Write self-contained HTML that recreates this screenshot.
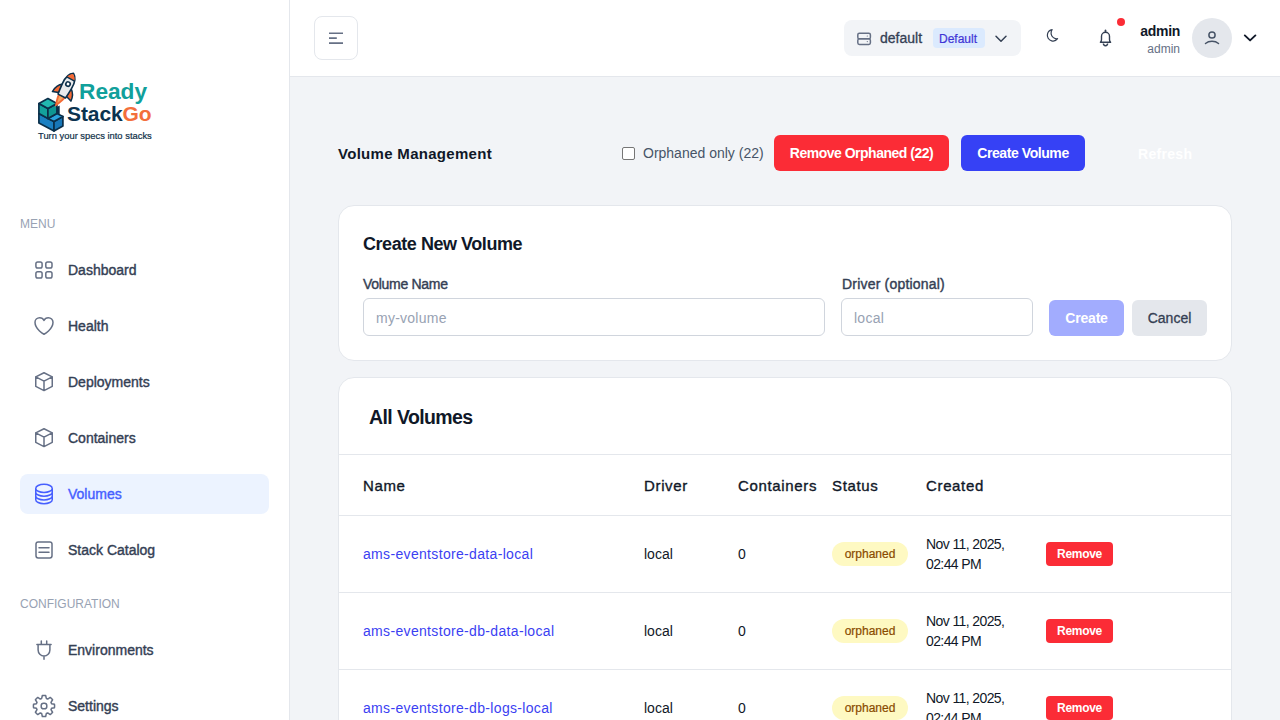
<!DOCTYPE html>
<html><head><meta charset="utf-8">
<style>
*{box-sizing:border-box;margin:0;padding:0}
html,body{width:1280px;height:720px;overflow:hidden;background:#f2f4f7;font-family:"Liberation Sans",sans-serif;color:#344054}
.abs{position:absolute}
#sidebar{position:absolute;left:0;top:0;width:290px;height:720px;background:#fff;border-right:1px solid #e4e7ec}
#header{position:absolute;left:290px;top:0;width:990px;height:77px;background:#fff;border-bottom:1px solid #e4e7ec}
.t{position:absolute;white-space:nowrap;line-height:20px}
.sec{position:absolute;left:20px;font-size:12px;color:#98a2b3;line-height:16px}
.item{position:absolute;left:20px;width:249px;height:40px;border-radius:8px}
.item svg{position:absolute;left:12px;top:8px;width:24px;height:24px;fill:none;stroke:#667085;stroke-width:1.5;stroke-linecap:round;stroke-linejoin:round}
.item span{position:absolute;left:48px;top:10px;line-height:20px;font-size:14px;color:#344054;-webkit-text-stroke:0.4px #344054}
.item.active{background:#ecf3ff}
.item.active svg{stroke:#465fff}
.item.active span{color:#465fff;-webkit-text-stroke:0.4px #465fff}
.card{position:absolute;left:338px;width:894px;background:#fff;border:1px solid #e4e7ec;border-radius:16px}
.btn{position:absolute;display:flex;align-items:center;justify-content:center;white-space:nowrap;font-weight:bold;font-size:14px}
.inp{position:absolute;border:1px solid #d0d5dd;border-radius:6px;background:#fff;height:38px;top:298px}
.inp span{position:absolute;left:12px;top:9px;line-height:20px;font-size:14px;color:#98a2b3;letter-spacing:0.25px}
.hline{position:absolute;left:339px;width:892px;height:1px;background:#e4e7ec}
.th{position:absolute;font-size:15px;color:#101828;line-height:20px;white-space:nowrap;-webkit-text-stroke:0.35px #101828;letter-spacing:0.65px}
.td{position:absolute;font-size:14px;color:#101828;line-height:20px;white-space:nowrap}
.link{color:#3b3ff2;letter-spacing:0.33px}
.badge{position:absolute;left:832px;width:76px;height:24px;border-radius:12px;background:#fef9c2;color:#894b00;font-size:12px;display:flex;align-items:center;justify-content:center;-webkit-text-stroke:0.2px #894b00}
.rm{position:absolute;left:1046px;width:67px;height:24px;border-radius:4px;background:#fb2c36;color:#fff;font-size:12px;font-weight:bold;display:flex;align-items:center;justify-content:center;letter-spacing:-0.3px}
</style></head><body>

<div id="sidebar">
  <!-- logo -->
  <svg class="abs" style="left:0;top:0" width="170" height="150" viewBox="0 0 170 150">
    <g stroke="#0b2f4a" stroke-width="1.7" stroke-linejoin="round">
      <!-- lower box -->
      <path d="M38.9 113.5 L54 121.5 L54 131 L38.9 123 Z" fill="#1b80c2"/>
      <path d="M54 121.5 L62.9 116.5 L62.9 126 L54 131 Z" fill="#1877b8"/>
      <path d="M47.9 118.5 L56.9 113.5 L62.9 116.5 L54 121.5 Z" fill="#2ba4de"/>
      <!-- upper cube -->
      <path d="M56 107.5 L59.7 105.6 L59.7 114.8 L56 112.9 Z" fill="#0b2f4a" stroke="none"/>
      <path d="M38.9 103.5 L47.9 108.5 L47.9 118.5 L38.9 113.5 Z" fill="#13a19c"/>
      <path d="M47.9 108.5 L56.9 103.5 L56.9 113.5 L47.9 118.5 Z" fill="#0f9692"/>
      <path d="M47.9 98.5 L38.9 103.5 L47.9 108.5 L56.9 103.5 Z" fill="#22b8b0"/>
    </g>
    <!-- rocket -->
    <g transform="translate(73.9 72.7) rotate(27.4)">
      <path d="M-4.2 26 L4.2 26 C3.2 31 1.2 35 -1.1 39 C-2.6 35 -3.9 31 -4.2 26 Z" fill="#f46a35"/>
      <path d="M-2.3 26.5 L2.3 26.5 C1.6 29.5 0.5 32 -0.8 34.5 C-1.6 32 -2.1 29.5 -2.3 26.5 Z" fill="#f8a65e"/>
      <path d="M-4.6 15.2 C-7.8 17.5 -10.2 22 -10.4 26.6 C-8.4 25.8 -6.2 25.1 -4.3 24.6 Z" fill="#f46a35" stroke="#0b2f4a" stroke-width="1.5" stroke-linejoin="round"/>
      <path d="M4.6 15.2 C7.8 17.5 10.2 22 10.4 26.6 C8.4 25.8 6.2 25.1 4.3 24.6 Z" fill="#f46a35" stroke="#0b2f4a" stroke-width="1.5" stroke-linejoin="round"/>
      <path d="M0 0.8 C4.5 3.5 5.6 9 5.2 15 C5 19 4.7 23 4.2 26.3 L-4.2 26.3 C-4.7 23 -5 19 -5.2 15 C-5.6 9 -4.5 3.5 0 0.8 Z" fill="#e9eaec" stroke="#0b2f4a" stroke-width="1.6" stroke-linejoin="round"/>
      <path d="M0 1.6 C2.4 3.1 3.6 5 4.2 6.8 L-4.2 6.8 C-3.6 5 -2.4 3.1 0 1.6 Z" fill="#f46a35"/>
      <path d="M-4.4 7.1 L4.4 7.1" stroke="#0b2f4a" stroke-width="1.4"/>
      <circle cx="0" cy="12.8" r="2.2" fill="#fff" stroke="#0b2f4a" stroke-width="1.6"/>
    </g>
  </svg>
  <div class="t" style="left:79px;top:77px;line-height:28px;font-size:22.7px;font-weight:bold;color:#11a09b">Ready</div>
  <div class="t" style="left:67px;top:100px;line-height:28px;font-size:21px;font-weight:bold;color:#0b3350;letter-spacing:-0.1px">Stack<span style="color:#f36f3c">Go</span></div>
  <div class="t" style="left:38px;top:129px;line-height:14px;font-size:9.4px;color:#0f3049;-webkit-text-stroke:0.2px #0f3049">Turn your specs into stacks</div>
  <div class="sec" style="top:216px">MENU</div>
  <div class="item" style="top:250px"><svg viewBox="0 0 24 24"><rect x="3.9" y="3.9" width="6.2" height="6.2" rx="1.8"/><rect x="13.8" y="3.9" width="6.2" height="6.2" rx="1.8"/><rect x="3.9" y="13.8" width="6.2" height="6.2" rx="1.8"/><rect x="13.8" y="13.8" width="6.2" height="6.2" rx="1.8"/></svg><span>Dashboard</span></div>
  <div class="item" style="top:306px"><svg viewBox="0 0 24 24"><path d="M21 8.25c0-2.485-2.099-4.5-4.688-4.5-1.935 0-3.597 1.126-4.312 2.733-.715-1.607-2.377-2.733-4.313-2.733C5.1 3.75 3 5.765 3 8.25c0 7.22 9 12 9 12s9-4.78 9-12Z"/></svg><span>Health</span></div>
  <div class="item" style="top:362px"><svg viewBox="0 0 24 24"><path d="M12 2.75L20.25 6.9V16.3L12 20.55L3.75 16.3V6.9Z M3.75 6.9L12 11.1L20.25 6.9 M12 11.1V20.55"/></svg><span>Deployments</span></div>
  <div class="item" style="top:418px"><svg viewBox="0 0 24 24"><path d="M12 2.75L20.25 6.9V16.3L12 20.55L3.75 16.3V6.9Z M3.75 6.9L12 11.1L20.25 6.9 M12 11.1V20.55"/></svg><span>Containers</span></div>
  <div class="item active" style="top:474px"><svg viewBox="0 0 24 24"><path d="M20.25 6.375c0 2.278-3.694 4.125-8.25 4.125S3.75 8.653 3.75 6.375m16.5 0c0-2.278-3.694-4.125-8.25-4.125S3.75 4.097 3.75 6.375m16.5 0v11.25c0 2.278-3.694 4.125-8.25 4.125s-8.25-1.847-8.25-4.125V6.375m16.5 0v3.75m-16.5-3.75v3.75m16.5 0v3.75C20.25 16.153 16.556 18 12 18s-8.25-1.847-8.25-4.125v-3.75m16.5 0c0 2.278-3.694 4.125-8.25 4.125s-8.25-1.847-8.25-4.125"/></svg><span>Volumes</span></div>
  <div class="item" style="top:530px"><svg viewBox="0 0 24 24"><rect x="4" y="3.9" width="16" height="16" rx="2.2"/><path d="M7 9.7h10M7 14.3h10"/></svg><span>Stack Catalog</span></div>
  <div class="sec" style="top:596px">CONFIGURATION</div>
  <div class="item" style="top:630px"><svg viewBox="0 0 24 24"><path d="M9.3 2.9v3.5M14.7 2.9v3.5M4.9 6.4h14.2M6.1 6.4v5.6a5.9 5.9 0 0 0 11.8 0V6.4M12 17.9v3.4"/></svg><span>Environments</span></div>
  <div class="item" style="top:686px"><svg viewBox="0 0 24 24"><path d="M9.69 4.45 L10.34 1.53 A10.60 10.60 0 0 1 13.66 1.53 L14.31 4.45 A7.90 7.90 0 0 1 15.71 5.02 L18.23 3.42 A10.60 10.60 0 0 1 20.58 5.77 L18.98 8.29 A7.90 7.90 0 0 1 19.55 9.69 L22.47 10.34 A10.60 10.60 0 0 1 22.47 13.66 L19.55 14.31 A7.90 7.90 0 0 1 18.98 15.71 L20.58 18.23 A10.60 10.60 0 0 1 18.23 20.58 L15.71 18.98 A7.90 7.90 0 0 1 14.31 19.55 L13.66 22.47 A10.60 10.60 0 0 1 10.34 22.47 L9.69 19.55 A7.90 7.90 0 0 1 8.29 18.98 L5.77 20.58 A10.60 10.60 0 0 1 3.42 18.23 L5.02 15.71 A7.90 7.90 0 0 1 4.45 14.31 L1.53 13.66 A10.60 10.60 0 0 1 1.53 10.34 L4.45 9.69 A7.90 7.90 0 0 1 5.02 8.29 L3.42 5.77 A10.60 10.60 0 0 1 5.77 3.42 L8.29 5.02 A7.90 7.90 0 0 1 9.69 4.45Z"/><rect x="9.2" y="9.2" width="5.6" height="5.6" rx="2.4"/></svg><span>Settings</span></div>
</div>

<div id="header">
  <div class="abs" style="left:24px;top:16px;width:44px;height:44px;border:1px solid #e4e7ec;border-radius:8px">
    <svg class="abs" style="left:0;top:0" width="42" height="42" viewBox="0 0 42 42"><path d="M14 16.2h14M14 21.1h7.8M14 26.1h14" stroke="#667085" stroke-width="1.6" stroke-linecap="butt"/></svg>
  </div>
  <div class="abs" style="left:554px;top:20px;width:177px;height:36px;background:#f2f4f7;border-radius:8px">
    <svg class="abs" style="left:12px;top:12px" width="16" height="14" viewBox="0 0 16 14"><rect x="1.8" y="1.2" width="12.6" height="5.6" rx="1.6" fill="none" stroke="#667085" stroke-width="1.5"/><rect x="1.8" y="6.8" width="12.6" height="5.6" rx="1.6" fill="none" stroke="#667085" stroke-width="1.5"/><circle cx="11.3" cy="4" r="0.6" fill="#667085"/><circle cx="11.3" cy="9.6" r="0.6" fill="#667085"/></svg>
    <div class="t" style="left:36px;top:8px;font-size:14px;color:#344054;-webkit-text-stroke:0.3px #344054">default</div>
    <div class="abs" style="left:89px;top:8px;width:52px;height:20px;border-radius:4px;background:#dbeafe"></div>
    <div class="t" style="left:95px;top:9px;font-size:12px;color:#3f35d6;-webkit-text-stroke:0.2px #3f35d6">Default</div>
    <svg class="abs" style="left:150px;top:13px" width="14" height="10" viewBox="0 0 14 10"><path d="M2 3.2l5 5 5-5" fill="none" stroke="#344054" stroke-width="1.5" stroke-linecap="round" stroke-linejoin="round"/></svg>
  </div>
  <div class="abs" style="left:827px;top:18px;width:8px;height:8px;border-radius:50%;background:#fb2c36"></div>
  <div class="t" style="right:100px;top:21px;font-size:14px;font-weight:bold;color:#101828;letter-spacing:-0.3px">admin</div>
  <div class="t" style="right:100px;top:39px;font-size:12px;color:#667085">admin</div>
  <div class="abs" style="left:902px;top:18px;width:40px;height:40px;border-radius:50%;background:#e4e7ec"></div>
  </div>

<svg class="abs" style="left:0;top:0" width="1280" height="77" viewBox="0 0 1280 77" fill="none">
  <svg x="1045.5" y="28.6" width="14" height="14" viewBox="0 0 24 24"><path transform="rotate(14 12 12)" d="M21.752 15.002A9.72 9.72 0 0 1 18 15.75c-5.385 0-9.75-4.365-9.75-9.75 0-1.33.266-2.597.748-3.752A9.753 9.753 0 0 0 3 11.25C3 16.635 7.365 21 12.75 21a9.753 9.753 0 0 0 9.002-5.998Z" stroke="#344054" stroke-width="2.1" stroke-linejoin="round" fill="none"/></svg>
  <path d="M1100.4 42.3c0.9-0.8 1.1-1.6 1.1-2.8V36.3a4 4 0 0 1 8 0v3.2c0 1.2 0.2 2 1.1 2.8Z" stroke="#344054" stroke-width="1.4" stroke-linejoin="round"/>
  <path d="M1105.5 30.3v1.6" stroke="#344054" stroke-width="1.6" stroke-linecap="round"/>
  <path d="M1103.4 43.6a2.1 2.1 0 0 0 4.2 0" stroke="#344054" stroke-width="1.4"/>
  <circle cx="1212" cy="35" r="3.1" stroke="#475467" stroke-width="1.5"/>
  <path d="M1205.5 43.5a8.5 6 0 0 1 13 0" stroke="#475467" stroke-width="1.5" stroke-linecap="round"/>
  <path d="M1244.8 35.4l5.3 5 5.3-5" stroke="#101828" stroke-width="1.9" stroke-linecap="round" stroke-linejoin="round"/>
</svg>
<!-- page head -->
<div class="t" style="left:338px;top:144px;font-size:15px;font-weight:bold;color:#101828;letter-spacing:0.3px">Volume Management</div>
<div class="abs" style="left:622px;top:147px;width:13px;height:13px;border:1px solid #767676;border-radius:2px;background:#fff"></div>
<div class="t" style="left:643px;top:143px;font-size:14px;color:#475467">Orphaned only (22)</div>
<div class="btn" style="left:774px;top:135px;width:175px;height:36px;background:#fb2c36;color:#fff;border-radius:6px;letter-spacing:-0.5px">Remove Orphaned (22)</div>
<div class="btn" style="left:961px;top:135px;width:124px;height:36px;background:#3641f5;color:#fff;border-radius:6px;letter-spacing:-0.42px">Create Volume</div>
<div class="t" style="left:1138px;top:144px;font-size:14px;font-weight:bold;color:#fff;letter-spacing:0.3px">Refresh</div>

<!-- card 1 -->
<div class="card" style="top:205px;height:156px"></div>
<div class="t" style="left:363px;top:234px;font-size:18px;font-weight:bold;color:#101828;letter-spacing:-0.45px">Create New Volume</div>
<div class="t" style="left:363px;top:274px;font-size:14px;color:#344054;letter-spacing:-0.3px;-webkit-text-stroke:0.4px #344054">Volume Name</div>
<div class="inp" style="left:363px;width:462px"><span>my-volume</span></div>
<div class="t" style="left:842px;top:274px;font-size:14px;color:#344054;letter-spacing:0.2px;-webkit-text-stroke:0.4px #344054">Driver (optional)</div>
<div class="inp" style="left:841px;width:192px"><span>local</span></div>
<div class="btn" style="left:1049px;top:300px;width:75px;height:36px;background:#a2acfe;color:#fff;border-radius:6px;letter-spacing:-0.2px">Create</div>
<div class="btn" style="left:1132px;top:300px;width:75px;height:36px;background:#e4e7ec;color:#344054;border-radius:6px;font-weight:normal;-webkit-text-stroke:0.3px #344054">Cancel</div>

<!-- card 2 -->
<div class="card" style="top:377px;height:400px"></div>
<div class="t" style="left:369px;top:405px;font-size:19.5px;font-weight:bold;color:#101828;line-height:24px;letter-spacing:-0.6px">All Volumes</div>
<div class="hline" style="top:454px"></div>
<div class="th" style="left:363px;top:476px">Name</div>
<div class="th" style="left:644px;top:476px">Driver</div>
<div class="th" style="left:738px;top:476px">Containers</div>
<div class="th" style="left:832px;top:476px">Status</div>
<div class="th" style="left:926px;top:476px">Created</div>
<div class="hline" style="top:515px"></div>
<div class="td link" style="left:363px;top:544px">ams-eventstore-data-local</div>
<div class="td" style="left:644px;top:544px">local</div>
<div class="td" style="left:738px;top:544px">0</div>
<div class="badge" style="top:542px">orphaned</div>
<div class="td" style="left:926px;top:534px;letter-spacing:-0.6px">Nov 11, 2025,<br>02:44 PM</div>
<div class="rm" style="top:542px">Remove</div>
<div class="hline" style="top:592px"></div>
<div class="td link" style="left:363px;top:621px">ams-eventstore-db-data-local</div>
<div class="td" style="left:644px;top:621px">local</div>
<div class="td" style="left:738px;top:621px">0</div>
<div class="badge" style="top:619px">orphaned</div>
<div class="td" style="left:926px;top:611px;letter-spacing:-0.6px">Nov 11, 2025,<br>02:44 PM</div>
<div class="rm" style="top:619px">Remove</div>
<div class="hline" style="top:669px"></div>
<div class="td link" style="left:363px;top:698px">ams-eventstore-db-logs-local</div>
<div class="td" style="left:644px;top:698px">local</div>
<div class="td" style="left:738px;top:698px">0</div>
<div class="badge" style="top:696px">orphaned</div>
<div class="td" style="left:926px;top:688px;letter-spacing:-0.6px">Nov 11, 2025,<br>02:44 PM</div>
<div class="rm" style="top:696px">Remove</div>

</body></html>
